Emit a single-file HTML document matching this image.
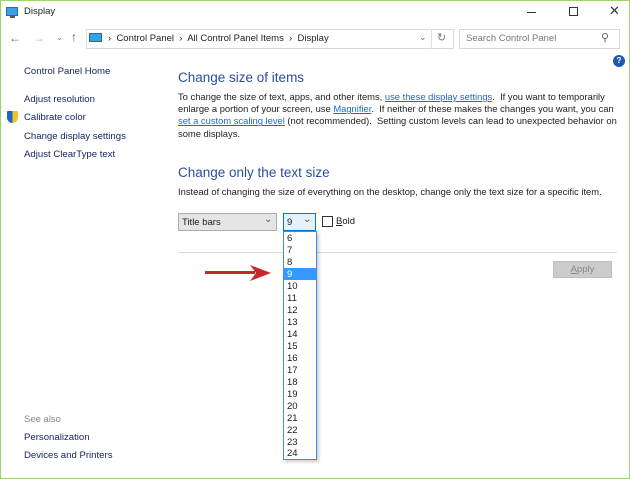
<!DOCTYPE html>
<html><head><style>
*{margin:0;padding:0;box-sizing:border-box}
body{width:630px;height:479px;overflow:hidden;background:#fff;font-family:"Liberation Sans",sans-serif;font-size:9.5px;color:#1a1a1a;position:relative}
.win{position:absolute;left:0;top:0;width:630px;height:479px;border:1px solid #9bd36f;border-top:none;}
.a{position:absolute;white-space:nowrap}
.nav{color:#172660;font-size:9.6px}
h{position:absolute;color:#2b4ea0;font-size:13.5px;white-space:nowrap}
a{color:#1a6ad6;text-decoration:underline}
.p{position:absolute;left:178px;width:440px;line-height:12.2px;font-size:9.4px;color:#222}
.li{position:absolute;left:287px;font-size:9.5px;height:12px;line-height:12px}
</style></head><body>
<div class="win"></div>
<div style="position:absolute;left:0;top:0;width:630px;height:1px;background:#9bd36f"></div>
<div class="a" style="left:6px;top:7px;width:12px;height:9px;background:#3aa0e0;border:1px solid #1f6fa8"></div>
<div class="a" style="left:10px;top:16px;width:5px;height:2px;background:#555"></div>
<div class="a" style="left:24px;top:6px;font-size:9.5px;color:#222">Display</div>
<div class="a" style="left:527px;top:12px;width:9px;height:1px;background:#333"></div>
<div class="a" style="left:569px;top:7px;width:9px;height:9px;border:1px solid #333"></div>
<div class="a" style="left:609px;top:3px;font-size:13px;color:#333">✕</div>
<div class="a" style="left:9px;top:31px;font-size:12px;color:#666">←</div>
<div class="a" style="left:33px;top:31px;font-size:12px;color:#bbb">→</div>
<div class="a" style="left:56px;top:33px;font-size:8px;color:#777">⌄</div>
<div class="a" style="left:71px;top:30px;font-size:12px;color:#555">↑</div>
<div class="a" style="left:86px;top:29px;width:368px;height:20px;border:1px solid #d9d9d9"></div>
<div class="a" style="left:89px;top:33px;width:13px;height:9px;background:#3aa0e0;border:1px solid #1f6fa8"></div>
<div class="a" style="left:108px;top:33px;font-size:9.5px;color:#222">›&nbsp; Control Panel &nbsp;›&nbsp; All Control Panel Items &nbsp;›&nbsp; Display</div>
<div class="a" style="left:419px;top:32px;font-size:9px;color:#666">⌄</div>
<div class="a" style="left:431px;top:29px;width:1px;height:20px;background:#e0e0e0"></div>
<div class="a" style="left:437px;top:31px;font-size:11px;color:#777">↻</div>
<div class="a" style="left:459px;top:29px;width:161px;height:20px;border:1px solid #d9d9d9"></div>
<div class="a" style="left:466px;top:33px;font-size:9.5px;color:#777">Search Control Panel</div>
<div class="a" style="left:601px;top:31px;font-size:11px;color:#666">⚲</div>
<div class="a" style="left:613px;top:55px;width:12px;height:12px;border-radius:50%;background:#1e5bb0;color:#fff;font-size:8px;text-align:center;line-height:12px;font-weight:bold">?</div>
<div class="a nav" style="left:24px;top:66px">Control Panel Home</div>
<div class="a nav" style="left:24px;top:94px">Adjust resolution</div>
<div class="a" style="left:7px;top:111px;width:11px;height:12px;background:linear-gradient(90deg,#1f66c4 50%,#f1c232 50%);border-radius:1px 1px 6px 6px"></div>
<div class="a nav" style="left:24px;top:112px">Calibrate color</div>
<div class="a nav" style="left:24px;top:131px">Change display settings</div>
<div class="a nav" style="left:24px;top:149px">Adjust ClearType text</div>
<div class="a" style="left:24px;top:414px;color:#888;font-size:9.5px">See also</div>
<div class="a nav" style="left:24px;top:432px">Personalization</div>
<div class="a nav" style="left:24px;top:450px">Devices and Printers</div>
<h style="left:178px;top:70px">Change size of items</h>
<div class="p" style="top:91px">To change the size of text, apps, and other items, <a>use these display settings</a>.&nbsp; If you want to temporarily enlarge a portion of your screen, use <a>Magnifier</a>.&nbsp; If neither of these makes the changes you want, you can <a>set a custom scaling level</a> (not recommended).&nbsp; Setting custom levels can lead to unexpected behavior on some displays.</div>
<h style="left:178px;top:165px">Change only the text size</h>
<div class="p" style="top:186px">Instead of changing the size of everything on the desktop, change only the text size for a specific item.</div>
<div class="a" style="left:178px;top:213px;width:99px;height:18px;background:#e5e5e5;border:1px solid #adadad"></div>
<div class="a" style="left:182px;top:217px;font-size:9.5px">Title bars</div>
<div class="a" style="left:264px;top:214px;font-size:10px;color:#555">⌄</div>
<div class="a" style="left:283px;top:213px;width:33px;height:18px;background:#e5f1fb;border:1px solid #0078d7"></div>
<div class="a" style="left:287px;top:217px;font-size:9.5px">9</div>
<div class="a" style="left:303px;top:214px;font-size:10px;color:#555">⌄</div>
<div class="a" style="left:322px;top:216px;width:11px;height:11px;border:1px solid #333;background:#fff"></div>
<div class="a" style="left:336px;top:216px;font-size:9.5px"><u>B</u>old</div>
<div class="a" style="left:178px;top:252px;width:439px;height:1px;background:#dcdcdc"></div>
<div class="a" style="left:553px;top:261px;width:59px;height:17px;background:#ccc;border:1px solid #bfbfbf;color:#888;text-align:center;line-height:15px;font-size:9.5px"><u>A</u>pply</div>
<svg class="a" style="left:203px;top:262px" width="70" height="22"><path d="M2 10.5H52" stroke="#c8282d" stroke-width="3"/><path d="M47 3L68 11L47 19L53 11Z" fill="#c8282d"/></svg>
<div class="a" style="left:283px;top:231px;width:34px;height:229px;background:#fff;border:1px solid #3c8fdc;box-shadow:2px 2px 3px rgba(0,0,0,.2)"></div>
<div class="a" style="left:284px;top:268px;width:32px;height:12px;background:#3399ff"></div>
<div class="li" style="top:233px">6</div><div class="li" style="top:245px">7</div><div class="li" style="top:257px">8</div><div class="li" style="top:269px;color:#fff">9</div>
<div class="li" style="top:281px">10</div><div class="li" style="top:293px">11</div><div class="li" style="top:305px">12</div><div class="li" style="top:317px">13</div>
<div class="li" style="top:329px">14</div><div class="li" style="top:341px">15</div><div class="li" style="top:353px">16</div><div class="li" style="top:365px">17</div>
<div class="li" style="top:377px">18</div><div class="li" style="top:389px">19</div><div class="li" style="top:401px">20</div><div class="li" style="top:413px">21</div>
<div class="li" style="top:425px">22</div><div class="li" style="top:437px">23</div><div class="li" style="top:448px">24</div>
</body></html>
